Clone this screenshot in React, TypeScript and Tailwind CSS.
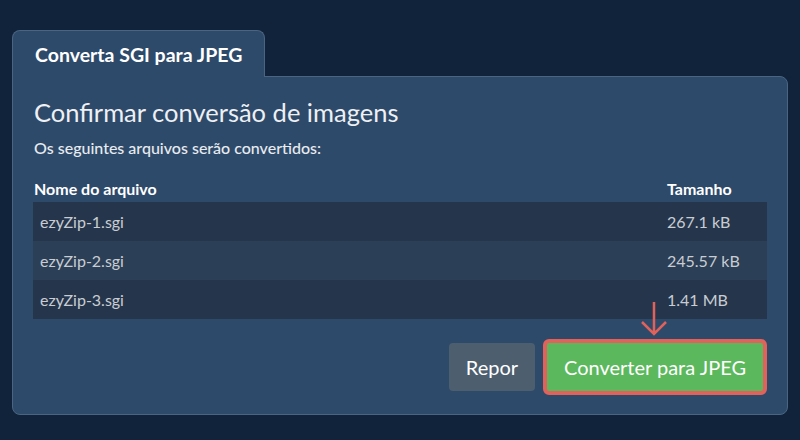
const files = [
  { name: "ezyZip-1.sgi", size: "267.1 kB" },
  { name: "ezyZip-2.sgi", size: "245.57 kB" },
  { name: "ezyZip-3.sgi", size: "1.41 MB" },
];

export default function App() {
  return (
    <div className="w-[800px] h-[440px] bg-[#11233a] px-3 pt-[30px] font-['Lato','Noto_Sans',sans-serif]">
      <div className="relative z-10 -mb-px inline-block rounded-t-lg border border-b-0 border-[#4a6482] bg-[#2d4a6a] px-[22px] pt-[14px] pb-[12px]">
        <span className="block text-[19.5px] font-bold leading-[20px] text-white">Converta SGI para JPEG</span>
      </div>
      <div className="rounded-b-lg rounded-tr-lg border border-[#4a6482] bg-[#2d4a6a] px-5 pt-[20px] pb-[19px]">
        <h1 className="pl-px text-[25.5px] leading-[30px] text-[#eef0f3]">Confirmar conversão de imagens</h1>
        <p className="mt-[11px] pl-px text-[16px] font-medium leading-[20px] text-[#e8ebef]">
          Os seguintes arquivos serão convertidos:
        </p>
        <div className="mt-[21px] flex pl-px text-[16px] font-bold leading-[20px] text-white">
          <div className="flex-1">Nome do arquivo</div>
          <div className="w-[100px]">Tamanho</div>
        </div>
        <div className="mt-[3px]">
          {files.map((f, i) => (
            <div
              key={f.name}
              className={`flex h-[39px] items-center text-[16px] text-[#c9cdd3] ${i % 2 === 1 ? "bg-[#2b3f57]" : "bg-[#25364c]"}`}
            >
              <div className="flex-1 pl-[7px]">{f.name}</div>
              <div className="w-[100px]">{f.size}</div>
            </div>
          ))}
        </div>
        <div className="relative mt-[20px] flex justify-end gap-2">
          <button className="mt-[4px] h-[48px] w-[86px] rounded bg-[#4d5e6f] text-[20px] text-white">Repor</button>
          <button className="h-[56px] w-[224px] rounded-md border-4 border-[#e0625b] bg-[#5cb85c] text-[20px] text-white">
            Converter para JPEG
          </button>
          <svg className="absolute right-[99px] -top-[38px]" width="28" height="36" viewBox="0 0 28 36" fill="none">
            <path d="M14 1 V33 M2 21 L14 33 L26 21" stroke="#e0625b" strokeWidth="2.5" />
          </svg>
        </div>
      </div>
    </div>
  );
}
